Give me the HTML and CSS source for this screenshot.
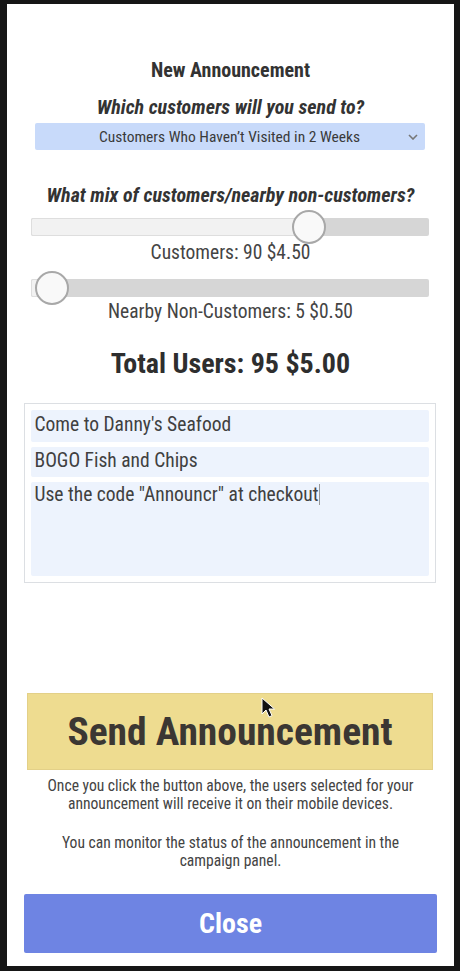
FILE: index.html
```html
<!DOCTYPE html>
<html>
<head>
<meta charset="utf-8">
<link rel="stylesheet" href="styles.css">
</head>
<body>
<div class="panel">
  <h1 class="title">New Announcement</h1>
  <h2 class="question q1">Which customers will you send to?</h2>
  <div class="select">
    <span>Customers Who Haven’t Visited in 2 Weeks</span>
    <svg class="chev" width="10" height="6" viewBox="0 0 10 6"><path d="M1 1l4 4 4-4" fill="none" stroke="#777" stroke-width="1.6"/></svg>
  </div>
  <h2 class="question q2">What mix of customers/nearby non-customers?</h2>
  <div class="slider s1">
    <div class="fill" style="width:70%"></div>
    <div class="thumb" style="left:70%"></div>
  </div>
  <div class="slabel l1">Customers: 90 $4.50</div>
  <div class="slider s2">
    <div class="fill" style="width:5%"></div>
    <div class="thumb" style="left:5.3%"></div>
  </div>
  <div class="slabel l2">Nearby Non-Customers: 5 $0.50</div>
  <div class="total">Total Users: 95 $5.00</div>
  <div class="msgbox">
    <div class="field f1">Come to Danny's Seafood</div>
    <div class="field f2">BOGO Fish and Chips</div>
    <div class="field f3">Use the code "Announcr" at checkout<span class="caret"></span></div>
  </div>
  <div class="send">Send Announcement
    <svg class="cursor" width="14" height="22" viewBox="0 0 14 22"><path d="M1 1v16l4-4 3 7 3-1.4-3-6.6h5.5z" fill="#111" stroke="#fff" stroke-width="1"/></svg>
  </div>
  <p class="note">Once you click the button above, the users selected for your announcement will receive it on their mobile devices.</p>
  <p class="note n2">You can monitor the status of the announcement in the campaign panel.</p>
  <div class="close">Close</div>
</div>
</body>
</html>
```
FILE: styles.css
```css
html, body {
  margin: 0;
  padding: 0;
  background: #161616;
}
body {
  width: 460px;
  height: 971px;
  font-family: "Roboto Condensed", "Liberation Sans Narrow", "DejaVu Sans Condensed", Roboto, sans-serif;
  color: #3c3c3c;
}
.panel {
  box-sizing: border-box;
  margin: 4px 6px 0 7px;
  width: 447px;
  height: 962px;
  background: #fff;
  padding-top: 56px;
  display: flex;
  flex-direction: column;
  align-items: center;
  position: relative;
}
.title {
  margin: 0;
  font-size: 20px;
  line-height: 20px;
  font-weight: 700;
  color: #333;
}
.question {
  margin: 0;
  font-size: 20px;
  line-height: 22px;
  font-weight: 700;
  font-style: italic;
  color: #333;
}
.q1 { margin-top: 16px; }
.select {
  margin-top: 5px;
  margin-left: -2px;
  width: 390px;
  height: 27px;
  box-sizing: border-box;
  background: #c8dafa;
  border-radius: 2px;
  display: flex;
  align-items: center;
  justify-content: center;
  position: relative;
  font-size: 15.5px;
  color: #3a3a3a;
}
.chev {
  position: absolute;
  right: 7px;
  top: 11px;
}
.q2 { margin-top: 34px; }
.slider {
  position: relative;
  width: 398px;
  height: 18px;
  margin-left: -2px;
  box-sizing: border-box;
  background: #d6d6d6;
  border-radius: 2px;
}
.s1 { margin-top: 12px; }
.s2 { margin-top: 16px; }
.fill {
  height: 100%;
  box-sizing: border-box;
  background: #f2f2f2;
  border: 1px solid #dedede;
  border-radius: 2px 0 0 2px;
}
.thumb {
  position: absolute;
  top: 50%;
  width: 34px;
  height: 34px;
  box-sizing: border-box;
  border-radius: 50%;
  background: #f9f9f9;
  border: 2px solid #a8a8a8;
  transform: translate(-50%, -50%);
}
.slabel {
  font-size: 19.5px;
  line-height: 20px;
  color: #444;
}
.l1 { margin-top: 7px; }
.l2 { margin-top: 5px; }
.total {
  margin-top: 27px;
  font-size: 28px;
  line-height: 30px;
  font-weight: 700;
  color: #2e2e2e;
}
.msgbox {
  margin-top: 24px;
  margin-left: -2px;
  width: 412px;
  height: 180px;
  box-sizing: border-box;
  border: 1px solid #dcdfe3;
  padding: 6px;
  display: flex;
  flex-direction: column;
  gap: 5px;
}
.field {
  background: #edf3fd;
  border-radius: 2px;
  font-size: 19.5px;
  color: #404040;
  padding-left: 4px;
  box-sizing: border-box;
}
.f1 { height: 32px; line-height: 30px; }
.f2 { height: 30px; line-height: 28px; }
.f3 { flex: 1; line-height: 26px; }
.caret {
  display: inline-block;
  width: 1px;
  height: 21px;
  background: #999;
  vertical-align: -4px;
}
.send {
  position: relative;
  margin-top: 110px;
  width: 406px;
  height: 77px;
  margin-left: -1px;
  box-sizing: border-box;
  background: #eedc90;
  border: 1px solid #e3d088;
  display: flex;
  align-items: center;
  justify-content: center;
  font-size: 39.5px;
  font-weight: 700;
  color: #3b3733;
}
.cursor {
  position: absolute;
  left: 233px;
  top: 3px;
}
.note {
  margin: 7px 0 0;
  width: 384px;
  text-align: center;
  font-size: 15.6px;
  line-height: 18px;
  color: #444;
}
.n2 { margin-top: 21px; }
.close {
  margin-top: 24px;
  width: 413px;
  height: 59px;
  box-sizing: border-box;
  background: #6e84e3;
  border-radius: 2px;
  display: flex;
  align-items: center;
  justify-content: center;
  font-size: 28px;
  font-weight: 700;
  color: #fff;
}
```
